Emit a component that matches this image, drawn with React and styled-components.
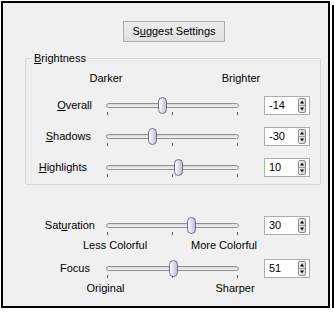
import React, { useId } from "react";
import styled, { createGlobalStyle } from "styled-components";

const Global = createGlobalStyle`
  html, body { margin: 0; padding: 0; background: #fff; }
  body { font-family: "Liberation Sans", Arial, sans-serif; font-size: 11px; color: #000; }
`;

const Frame = styled.div`
  box-sizing: border-box;
  width: 329px;
  height: 307px;
  margin: 1px 0 0 1px;
  border: 2px solid #000;
  background: #f0f0f0;
  box-shadow: 2px 2px 0 #fff, 4px 4px 0 #000;
  display: flex;
  flex-direction: column;
  line-height: 13px;
`;

const ButtonBar = styled.div`
  display: flex;
  padding: 18px 0 0 120px;
`;

const PushButton = styled.button`
  box-sizing: border-box;
  width: 102px;
  height: 21px;
  padding: 0;
  border: 1px solid #acacac;
  border-radius: 0;
  background: linear-gradient(#ececec, #e1e1e1);
  font: inherit;
  color: #000;
  line-height: 19px;
`;

const Key = styled.span`
  text-decoration: underline;
  text-underline-offset: 1px;
`;

const Group = styled.fieldset`
  box-sizing: border-box;
  width: 296px;
  min-width: 0;
  margin: 10px 0 0 22px;
  padding: 0 0 7px 0;
  border: 1px solid #d5dadf;
  border-radius: 2px;
`;

const Legend = styled.legend`
  margin-left: 6px;
  padding: 0 2px;
  line-height: 13px;
`;

const Body = styled.div`
  display: flex;
  flex-direction: column;
  padding-top: ${(p) => p.$top || 0}px;
  padding-left: ${(p) => p.$left || 0}px;
  margin-top: ${(p) => p.$mt || 0}px;
`;

const ScaleRow = styled.div`
  display: flex;
  height: 13px;
  margin-top: ${(p) => p.$mt || 0}px;
`;

const ScaleText = styled.span`
  width: 80px;
  flex: none;
  text-align: center;
  white-space: nowrap;
  margin-left: ${(p) => p.$ml}px;
`;

const Row = styled.div`
  display: flex;
  align-items: center;
  height: 20px;
  margin-top: ${(p) => p.$mt || 0}px;
`;

const Label = styled.span`
  box-sizing: border-box;
  width: 69px;
  flex: none;
  text-align: right;
  white-space: nowrap;
  padding-right: ${(p) => p.$pr || 0}px;
`;

const SliderBox = styled.div`
  position: relative;
  flex: none;
  width: 140px;
  height: 20px;
  margin-left: 7px;
`;

const Track = styled.div`
  position: absolute;
  left: 4px;
  right: 3px;
  top: 8px;
  height: 3px;
  border: 1px solid #8f8f8f;
  border-radius: 3px;
  background: linear-gradient(#d6d6d6, #f4f4f4);
`;

const Tick = styled.div`
  position: absolute;
  top: 17px;
  width: 1px;
  height: 3px;
  background: #5a5a5a;
  left: ${(p) => p.$x}px;
`;

const Thumb = styled.div`
  position: absolute;
  top: 2px;
  width: 9px;
  height: 17px;
  box-sizing: border-box;
  border: 1px solid #6f7088;
  border-radius: 5px;
  background: linear-gradient(90deg, #fbfbff 0%, #e2e2ee 45%, #bdbdd0 100%);
`;

const SpinBox = styled.div`
  box-sizing: border-box;
  flex: none;
  display: flex;
  align-items: center;
  justify-content: space-between;
  width: 46px;
  height: 19px;
  margin-left: 22px;
  padding: 0 3px 0 4px;
  border: 1px solid #abadb3;
  background: #fff;
`;

const SpinArrows = styled.svg`
  display: block;
  flex: none;
`;

function Spinner() {
  const id = useId();
  return (
    <SpinArrows width="8" height="15" viewBox="0 0 8 15">
      <defs>
        <linearGradient id={id} x1="0" x2="1" y1="0" y2="0">
          <stop offset="0" stopColor="#f6f6f6" />
          <stop offset="1" stopColor="#d4d4d4" />
        </linearGradient>
      </defs>
      <rect x="0.5" y="0.5" width="7" height="14" rx="1.5" fill={`url(#${id})`} stroke="#8a8a8a" />
      <line x1="1" x2="7" y1="7.5" y2="7.5" stroke="#9c9c9c" />
      <polygon points="2,5.5 6,5.5 4,2.5" fill="#000" />
      <polygon points="2,9.5 6,9.5 4,12.5" fill="#000" />
    </SpinArrows>
  );
}

function Slider({ value, min, max }) {
  const center = 5 + ((value - min) / (max - min)) * 130;
  return (
    <SliderBox>
      <Track />
      <Tick $x={5} />
      <Tick $x={70} />
      <Tick $x={135} />
      <Thumb style={{ left: `${center - 4.5}px` }} />
    </SliderBox>
  );
}

function Control({ label, pr, value, min = -100, max = 100, mt }) {
  return (
    <Row $mt={mt}>
      <Label $pr={pr}>{label}</Label>
      <Slider value={value} min={min} max={max} />
      <SpinBox>
        <span>{value}</span>
        <Spinner />
      </SpinBox>
    </Row>
  );
}

function Scale({ a, b, left, right, mt, origin = 26 }) {
  return (
    <ScaleRow $mt={mt}>
      <ScaleText $ml={a - 40 - origin}>{left}</ScaleText>
      <ScaleText $ml={b - a - 80}>{right}</ScaleText>
    </ScaleRow>
  );
}

export default function App() {
  return (
    <>
      <Global />
      <Frame>
        <ButtonBar>
          <PushButton>
            S<Key>u</Key>ggest Settings
          </PushButton>
        </ButtonBar>
        <Group>
          <Legend>
            <Key>B</Key>rightness
          </Legend>
          <Body $top={7}>
            <Scale a={106} b={241} left="Darker" right="Brighter" />
            <Control mt={10} pr={3} value={-14} label={<><Key>O</Key>verall</>} />
            <Control mt={11} pr={4} value={-30} label={<><Key>S</Key>hadows</>} />
            <Control mt={11} pr={8} value={10} label={<><Key>H</Key>ighlights</>} />
          </Body>
        </Group>
        <Body $mt={30} $left={23}>
          <Control pr={0} value={30} label={<>Sat<Key>u</Key>ration</>} />
          <Scale mt={4} a={115} b={224} left="Less Colorful" right="More Colorful" />
          <Control mt={6} pr={5} value={51} min={0} max={100} label="Focus" />
          <Scale mt={4} a={105.5} b={235} left="Original" right="Sharper" />
        </Body>
      </Frame>
    </>
  );
}
